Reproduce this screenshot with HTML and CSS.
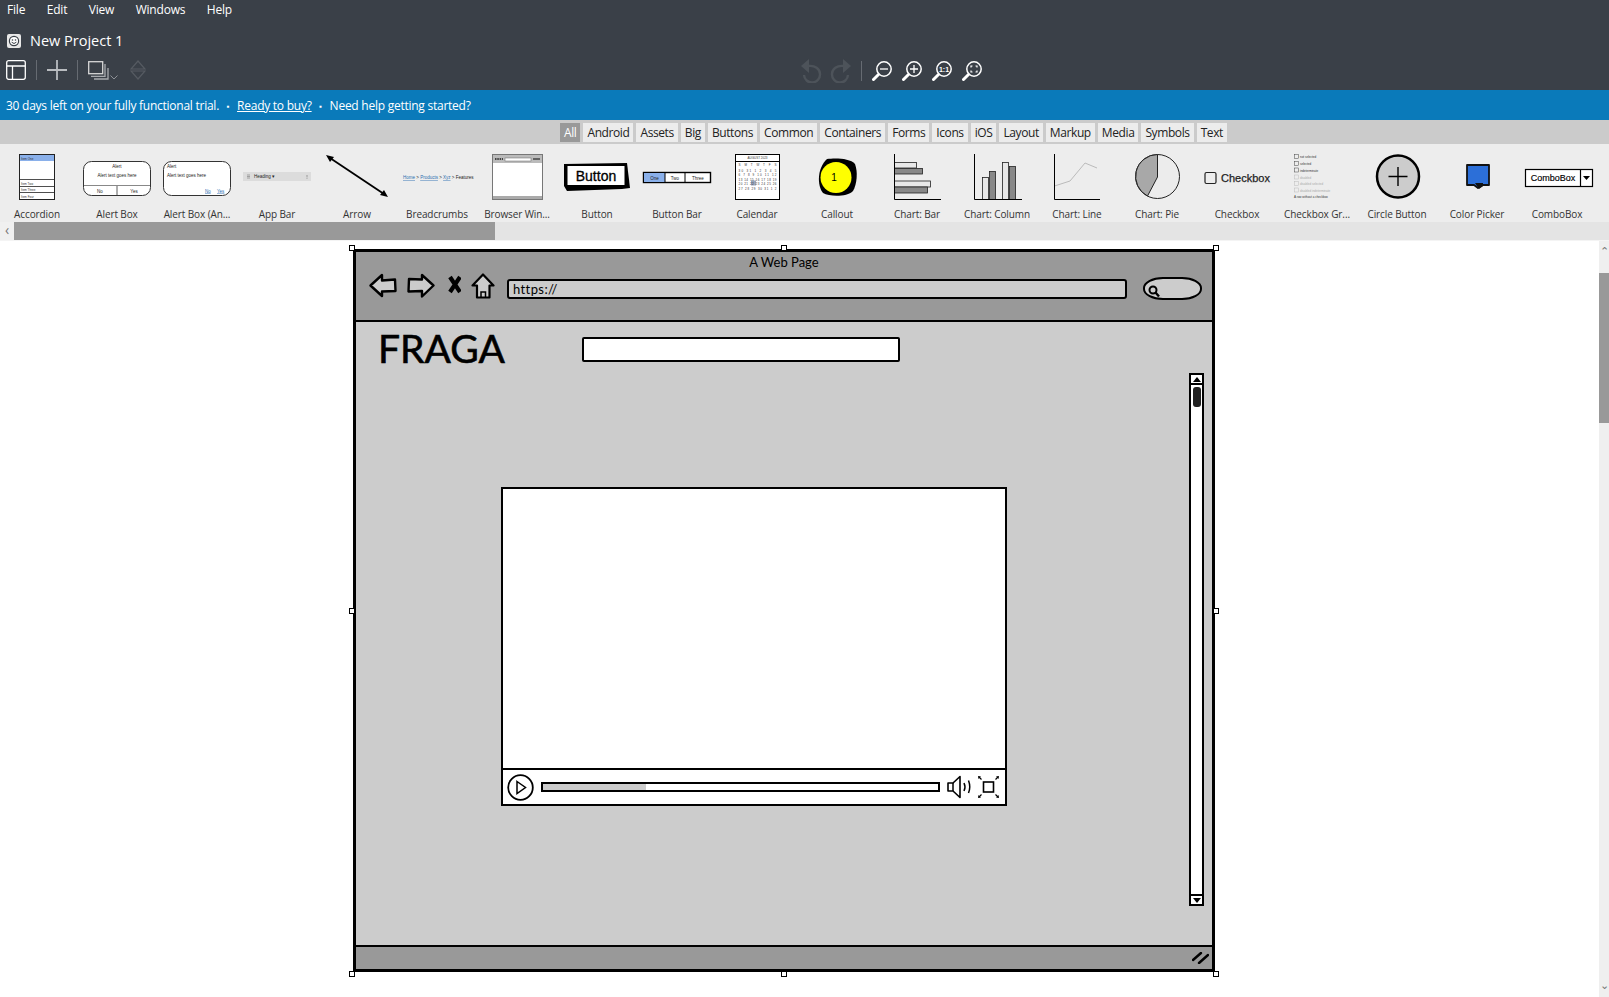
FILE: index.html
```html
<!DOCTYPE html>
<html lang="en">
<head>
    <meta charset="UTF-8">
    <title>New Project 1</title>
    <link rel="stylesheet" href="styles.css">
</head>
<body>
<svg class="defs" width="0" height="0">
    <symbol id="lens" viewBox="0 0 20 20">
        <circle cx="12" cy="8" r="7.2" fill="none" stroke="#fff" stroke-width="1.5"/>
        <path d="M6.5 13.5 1.5 18.5" stroke="#fff" stroke-width="3" stroke-linecap="round"/>
    </symbol>
</svg>

<div class="app">
    <!-- top dark chrome -->
    <header class="chrome">
        <nav class="menu">
            <span class="menu-item">File</span>
            <span class="menu-item">Edit</span>
            <span class="menu-item">View</span>
            <span class="menu-item">Windows</span>
            <span class="menu-item">Help</span>
        </nav>
        <div class="title-row">
            <svg class="logo" width="14" height="14" viewBox="0 0 14 14">
                <rect width="14" height="14" rx="2" fill="#e8e8e8"/>
                <circle cx="7" cy="7" r="5.2" fill="#3a4048"/>
                <circle cx="7" cy="7" r="4" fill="#fff"/>
                <circle cx="5.5" cy="6" r=".8" fill="#3a4048"/>
                <circle cx="8.5" cy="6" r=".8" fill="#3a4048"/>
                <path d="M4.6 8.2Q7 10.8 9.4 8.2" fill="none" stroke="#3a4048"/>
            </svg>
            <span class="project-name">New Project 1</span>
        </div>
        <div class="toolbar">
            <div class="tool-group">
                <svg width="20" height="20" viewBox="0 0 20 20">
                    <rect x=".7" y=".7" width="18.6" height="18.6" rx="2" fill="none" stroke="#fff" stroke-width="1.3"/>
                    <path d="M1 6H19M6.5 6V19" stroke="#fff" stroke-width="1.3"/>
                </svg>
                <span class="tool-sep"></span>
                <svg width="20" height="20" viewBox="0 0 20 20">
                    <path d="M10 0V20M0 10H20" stroke="#b9bcc0" stroke-width="1.8"/>
                </svg>
                <span class="tool-sep"></span>
                <svg width="31" height="20" viewBox="0 0 31 20">
                    <rect x=".7" y="1.7" width="14" height="12" fill="#3a4048" stroke="#d8d8d8" stroke-width="1.3"/>
                    <path d="M3 16.3H17V4M6 19H20V8" fill="none" stroke="#a8abaf" stroke-width="1.3"/>
                    <path d="M22.5 15.5 26 19l3.500-3.500" fill="none" stroke="#8d9196"/>
                </svg>
                <svg class="tool-dim" width="16" height="20" viewBox="0 0 16 20">
                    <path d="M8 1 15 9H1ZM8 19 15 11H1Z" fill="none" stroke="#565b62" stroke-width="1.2"/>
                </svg>
            </div>
            <div class="tool-group tool-group-view">
                <svg width="22" height="24" viewBox="0 0 22 24">
                    <path d="M9 0 1 7l8 7Z" fill="#4d535a"/>
                    <path d="M8 7C15 6 20 10 20 15a8 8 0 0 1-16 1" fill="none" stroke="#4d535a" stroke-width="2.4"/>
                </svg>
                <svg width="22" height="24" viewBox="0 0 22 24">
                    <path d="M13 0 21 7l-8 7Z" fill="#4d535a"/>
                    <path d="M14 7C7 6 2 10 2 15a8 8 0 0 0 16 1" fill="none" stroke="#4d535a" stroke-width="2.4"/>
                </svg>
                <span class="tool-sep tool-sep-view"></span>
                <svg class="zoom-tool" width="20" height="20" viewBox="0 0 20 20">
                    <use href="#lens"/>
                    <path d="M8 8H16" stroke="#fff" stroke-width="1.300"/>
                </svg>
                <svg class="zoom-tool" width="20" height="20" viewBox="0 0 20 20">
                    <use href="#lens"/>
                    <path d="M8 8H16M12 4V12" stroke="#fff" stroke-width="1.300"/>
                </svg>
                <svg class="zoom-tool" width="20" height="20" viewBox="0 0 20 20">
                    <use href="#lens"/>
                    <text x="12" y="10.500" text-anchor="middle" class="svg-ratio">1:1</text>
                </svg>
                <svg class="zoom-tool" width="20" height="20" viewBox="0 0 20 20">
                    <use href="#lens"/>
                    <path d="M9 6.500V5H10.500M13.500 5H15V6.500M15 9.500V11H13.500M10.500 11H9V9.500" fill="none" stroke="#fff" stroke-width="1.200"/>
                </svg>
            </div>
        </div>
    </header>

    <div class="trial-bar">
        <span>30 days left on your fully functional trial.</span>
        <span class="dot">▪</span>
        <a class="trial-link">Ready to buy?</a>
        <span class="dot">▪</span>
        <span>Need help getting started?</span>
    </div>

    <!-- UI library filter -->
    <div class="filters">
        <span class="filter filter-on">All</span>
        <span class="filter">Android</span>
        <span class="filter">Assets</span>
        <span class="filter">Big</span>
        <span class="filter">Buttons</span>
        <span class="filter">Common</span>
        <span class="filter">Containers</span>
        <span class="filter">Forms</span>
        <span class="filter">Icons</span>
        <span class="filter">iOS</span>
        <span class="filter">Layout</span>
        <span class="filter">Markup</span>
        <span class="filter">Media</span>
        <span class="filter">Symbols</span>
        <span class="filter">Text</span>
    </div>

    <div class="palette">
        <div class="pal-strip">
            <div class="pal-item">
                <svg class="pal-thumb" viewBox="0 0 80 56">
                    <rect x="22.500" y="4.500" width="35" height="45" fill="#fff" stroke="#222"/>
                    <rect x="23" y="5" width="34" height="6" fill="#8ab0ea"/>
                    <path d="M22 29.500H58M22 36.500H58M22 42.500H58" stroke="#222" stroke-width=".8"/>
                    <g class="svg-tiny">
                        <text x="24" y="9.500">Item One</text>
                        <text x="24" y="34.500">Item Two</text>
                        <text x="24" y="41">Item Three</text>
                        <text x="24" y="47.500">Item Four</text>
                    </g>
                </svg>
                <span class="pal-label">Accordion</span>
            </div>
            <div class="pal-item">
                <svg class="pal-thumb" viewBox="0 0 80 56">
                    <rect x="6.500" y="11.500" width="67" height="34" rx="8" fill="#fff" stroke="#333"/>
                    <path d="M7 35.500H73" stroke="#888"/>
                    <path d="M40 36V45" stroke="#333" stroke-width=".8"/>
                    <g class="svg-small" text-anchor="middle">
                        <text x="40" y="17.500">Alert</text>
                        <text x="40" y="26.500">Alert text goes here</text>
                        <text x="23" y="42.500">No</text>
                        <text x="57" y="42.500">Yes</text>
                    </g>
                </svg>
                <span class="pal-label">Alert Box</span>
            </div>
            <div class="pal-item">
                <svg class="pal-thumb" viewBox="0 0 80 56">
                    <rect x="6.500" y="11.500" width="67" height="34" rx="8" fill="#fff" stroke="#333"/>
                    <g class="svg-small">
                        <text x="10" y="17.500">Alert</text>
                        <text x="10" y="26.500">Alert text goes here</text>
                        <text x="48" y="42.500" class="svg-link">No</text>
                        <text x="60" y="42.500" class="svg-link">Yes</text>
                    </g>
                </svg>
                <span class="pal-label">Alert Box (An...</span>
            </div>
            <div class="pal-item">
                <svg class="pal-thumb" viewBox="0 0 80 56">
                    <rect x="6" y="22" width="68" height="9" fill="#dcdcdc"/>
                    <path d="M10 25h3M10 26.500h3M10 28h3" stroke="#666" stroke-width=".5"/>
                    <text x="17" y="28" class="svg-small">Heading ▾</text>
                    <path d="M70 25v4" stroke="#777" stroke-dasharray=".7 .7"/>
                </svg>
                <span class="pal-label">App Bar</span>
            </div>
            <div class="pal-item">
                <svg class="pal-thumb" viewBox="0 0 80 56">
                    <path d="M13 8 67 44" stroke="#000" stroke-width="1.800"/>
                    <path d="M9 5 17 7 13 12ZM71 47 63 45 67 40Z" fill="#000"/>
                </svg>
                <span class="pal-label">Arrow</span>
            </div>
            <div class="pal-item">
                <svg class="pal-thumb" viewBox="0 0 80 56">
                    <text x="6" y="29" class="svg-small">
                        <tspan class="svg-link">Home</tspan> &gt; <tspan class="svg-link">Products</tspan> &gt; <tspan class="svg-link">Xyz</tspan> &gt; Features
                    </text>
                </svg>
                <span class="pal-label">Breadcrumbs</span>
            </div>
            <div class="pal-item">
                <svg class="pal-thumb" viewBox="0 0 80 56">
                    <rect x="15.500" y="4.500" width="50" height="45" fill="#fff" stroke="#777"/>
                    <rect x="16" y="5" width="49" height="8" fill="#bbb"/>
                    <rect x="28" y="8" width="26" height="3" fill="#fff" stroke="#666" stroke-width=".5"/>
                    <path d="M18 9h8" stroke="#444" stroke-dasharray="1.500 .8" stroke-width="2"/>
                    <path d="M56 9h7" stroke="#444" stroke-width="1.500"/>
                    <rect x="16" y="46" width="49" height="3" fill="#aaa"/>
                </svg>
                <span class="pal-label">Browser Win...</span>
            </div>
            <div class="pal-item">
                <svg class="pal-thumb" viewBox="0 0 80 56">
                    <path d="M7 14 70 13 73 38 65 39 10 41 7 36Z" fill="#000"/>
                    <rect x="10.500" y="16" width="57" height="19" fill="#fff"/>
                    <text x="39" y="30.500" text-anchor="middle" class="svg-btn">Button</text>
                </svg>
                <span class="pal-label">Button</span>
            </div>
            <div class="pal-item">
                <svg class="pal-thumb" viewBox="0 0 80 56">
                    <rect x="6.500" y="22.500" width="67" height="10" fill="#fff" stroke="#000" stroke-width="1.400"/>
                    <rect x="7" y="23" width="21" height="9" fill="#8ab0ea"/>
                    <path d="M28 23V32M48 23V32" stroke="#000"/>
                    <g class="svg-small" text-anchor="middle">
                        <text x="17.500" y="29.500">One</text>
                        <text x="38" y="29.500">Two</text>
                        <text x="61" y="29.500">Three</text>
                    </g>
                </svg>
                <span class="pal-label">Button Bar</span>
            </div>
            <div class="pal-item">
                <svg class="pal-thumb" viewBox="0 0 80 56">
                    <rect x="18.500" y="4.500" width="44" height="45" fill="#fff" stroke="#000"/>
                    <path d="M19 11.500H62" stroke="#000"/>
                    <rect x="34" y="30.500" width="5" height="5" fill="#9aa7bb"/>
                    <g class="svg-tiny" text-anchor="middle">
                        <text x="40.500" y="9">AUGUST 2023</text>
                        <text x="40.500" y="16" textLength="38">S M T W T F S</text>
                        <text x="40.500" y="21.500" textLength="38">30 31 1 2 3 4 5</text>
                        <text x="40.500" y="26" textLength="38">6 7 8 9 10 11 12</text>
                        <text x="40.500" y="30.500" textLength="38">13 14 15 16 17 18 19</text>
                        <text x="40.500" y="35" textLength="38">20 21 22 23 24 25 26</text>
                        <text x="40.500" y="39.500" textLength="38">27 28 29 30 31 1 2</text>
                    </g>
                </svg>
                <span class="pal-label">Calendar</span>
            </div>
            <div class="pal-item">
                <svg class="pal-thumb" viewBox="0 0 80 56">
                    <path d="M30 9C38 8 53 8 58 14 61 22 60 34 56 41 50 47 33 47 26 43 20 36 20 18 30 9Z" fill="#000"/>
                    <ellipse cx="39" cy="27.500" rx="15.500" ry="15.500" fill="#ff0"/>
                    <text x="37" y="31" text-anchor="middle" class="svg-call">1</text>
                </svg>
                <span class="pal-label">Callout</span>
            </div>
            <div class="pal-item">
                <svg class="pal-thumb" viewBox="0 0 80 56">
                    <rect x="17.500" y="12.500" width="22" height="5.500" fill="#e8e8e8" stroke="#222" stroke-width=".8"/>
                    <rect x="17.500" y="18.500" width="28" height="5.500" fill="#888" stroke="#222" stroke-width=".8"/>
                    <rect x="17.500" y="31" width="36" height="6" fill="#e8e8e8" stroke="#222" stroke-width=".8"/>
                    <rect x="17.500" y="37" width="33" height="6" fill="#888" stroke="#222" stroke-width=".8"/>
                    <path d="M17.500 4V49.500H64" fill="none" stroke="#000"/>
                </svg>
                <span class="pal-label">Chart: Bar</span>
            </div>
            <div class="pal-item">
                <svg class="pal-thumb" viewBox="0 0 80 56">
                    <rect x="25.500" y="27.500" width="6" height="22" fill="#e8e8e8" stroke="#222" stroke-width=".8"/>
                    <rect x="32.500" y="21.500" width="6" height="28" fill="#888" stroke="#222" stroke-width=".8"/>
                    <rect x="45.500" y="12.500" width="6" height="37" fill="#e8e8e8" stroke="#222" stroke-width=".8"/>
                    <rect x="52.500" y="16.500" width="6" height="33" fill="#888" stroke="#222" stroke-width=".8"/>
                    <path d="M17.500 4V49.500H65" fill="none" stroke="#000"/>
                </svg>
                <span class="pal-label">Chart: Column</span>
            </div>
            <div class="pal-item">
                <svg class="pal-thumb" viewBox="0 0 80 56">
                    <path d="M17.500 36 33 31 48 13 60 18" fill="none" stroke="#bbb"/>
                    <path d="M17.500 4V49.500H63" fill="none" stroke="#000"/>
                </svg>
                <span class="pal-label">Chart: Line</span>
            </div>
            <div class="pal-item">
                <svg class="pal-thumb" viewBox="0 0 80 56">
                    <circle cx="40.500" cy="26.500" r="22" fill="#ececec" stroke="#222"/>
                    <path d="M40.500 4.500A22 22 0 0 0 30.500 46L40.500 27Z" fill="#a8a8a8" stroke="#222"/>
                </svg>
                <span class="pal-label">Chart: Pie</span>
            </div>
            <div class="pal-item">
                <svg class="pal-thumb" viewBox="0 0 80 56">
                    <rect x="8" y="22.500" width="11" height="11" rx="1.500" fill="none" stroke="#222" stroke-width="1.200"/>
                    <text x="24" y="32" class="svg-check">Checkbox</text>
                </svg>
                <span class="pal-label">Checkbox</span>
            </div>
            <div class="pal-item">
                <svg class="pal-thumb" viewBox="0 0 80 56">
                    <g fill="none" stroke="#444" stroke-width=".5">
                        <rect x="17.500" y="4.500" width="4" height="4"/>
                        <rect x="17.500" y="11.500" width="4" height="4"/>
                        <rect x="17.500" y="18" width="4" height="4"/>
                    </g>
                    <g fill="none" stroke="#bbb" stroke-width=".5">
                        <rect x="17.500" y="25" width="4" height="4"/>
                        <rect x="17.500" y="31.500" width="4" height="4"/>
                        <rect x="17.500" y="38" width="4" height="4"/>
                    </g>
                    <g class="svg-tiny">
                        <text x="23" y="8">not selected</text>
                        <text x="23" y="15">selected</text>
                        <text x="23" y="21.500">indeterminate</text>
                        <text x="23" y="28.500" class="svg-off">disabled</text>
                        <text x="23" y="35" class="svg-off">disabled selected</text>
                        <text x="23" y="41.500" class="svg-off">disabled indeterminate</text>
                        <text x="17" y="48">A row without a checkbox</text>
                    </g>
                </svg>
                <span class="pal-label">Checkbox Gr...</span>
            </div>
            <div class="pal-item">
                <svg class="pal-thumb" viewBox="0 0 80 56">
                    <circle cx="41" cy="26.500" r="21" fill="#ccc" stroke="#000" stroke-width="2.500"/>
                    <path d="M41 17V36M31.500 26.500H50.500" stroke="#000" stroke-width="1.400"/>
                </svg>
                <span class="pal-label">Circle Button</span>
            </div>
            <div class="pal-item">
                <svg class="pal-thumb" viewBox="0 0 80 56">
                    <path d="M30 15H52V35H46L41 38 37 35H30Z" fill="#2c6fd8" stroke="#111" stroke-width="1.800" stroke-linejoin="round"/>
                    <path d="M38 33H46V36L42 39Z" fill="#111"/>
                </svg>
                <span class="pal-label">Color Picker</span>
            </div>
            <div class="pal-item">
                <svg class="pal-thumb" viewBox="0 0 80 56">
                    <rect x="8.500" y="19.500" width="67" height="17" fill="#fff" stroke="#000" stroke-width="1.200"/>
                    <path d="M63.500 20V36" stroke="#000" stroke-width="1.200"/>
                    <path d="M66 26H73L69.500 30Z" fill="#000"/>
                    <text x="36" y="31" text-anchor="middle" class="svg-combo">ComboBox</text>
                </svg>
                <span class="pal-label">ComboBox</span>
            </div>
        </div>
    </div>

    <div class="hscroll">
        <span class="hscroll-arrow">‹</span>
        <div class="hscroll-track"><div class="hscroll-thumb"></div></div>
    </div>

    <!-- editing canvas with the mockup on it -->
    <main class="canvas">
        <div class="stage">
            <div class="wire-window">
                <span class="handle handle-tl"></span>
                <span class="handle handle-tc"></span>
                <span class="handle handle-tr"></span>
                <span class="handle handle-ml"></span>
                <span class="handle handle-mr"></span>
                <span class="handle handle-bl"></span>
                <span class="handle handle-bc"></span>
                <span class="handle handle-br"></span>

                <div class="wire-top">
                    <div class="wire-title">A Web Page</div>
                    <div class="wire-nav">
                        <svg width="28" height="25" viewBox="0 0 28 25">
                            <path d="M1.500 12.500 13 2V7.500L26 6.500 26.500 18 13 18.500V23Z" fill="#ccc" stroke="#000" stroke-width="2.400" stroke-linejoin="round"/>
                        </svg>
                        <svg width="28" height="25" viewBox="0 0 28 25">
                            <path d="M26.500 12.500 15 2V6.500L2 6 1.500 18.500 15 18V23.500Z" fill="#ccc" stroke="#000" stroke-width="2.400" stroke-linejoin="round"/>
                        </svg>
                        <svg width="16" height="25" viewBox="0 0 16 25">
                            <path d="M5 4 15 19M15 4 5 19" stroke="#000" stroke-width="4.200"/>
                        </svg>
                        <svg width="24" height="27" viewBox="0 0 24 27">
                            <path d="M12 1.500 22.500 12.500H18.500V24.500H6V12.500H1.500Z" fill="#ccc" stroke="#000" stroke-width="2.200" stroke-linejoin="round"/>
                            <path d="M10 25V19H14.500V25" fill="none" stroke="#000" stroke-width="1.500"/>
                        </svg>
                        <div class="wire-url">https://</div>
                        <div class="wire-search">
                            <svg width="14" height="14" viewBox="0 0 14 14">
                                <circle cx="6" cy="6" r="3.500" fill="none" stroke="#000" stroke-width="2"/>
                                <path d="M8.500 8.500 12 12.500" stroke="#000" stroke-width="2.400"/>
                            </svg>
                        </div>
                    </div>
                </div>

                <div class="wire-body">
                    <div class="wire-logo">FRAGA</div>
                    <div class="wire-input"></div>

                    <div class="wire-video">
                        <div class="video-screen"></div>
                        <div class="video-controls">
                            <svg width="27" height="27" viewBox="0 0 27 27">
                                <circle cx="13.500" cy="13.500" r="12.300" fill="#fff" stroke="#000" stroke-width="1.800"/>
                                <path d="M10 7.500 18.500 13.500 10 19.500Z" fill="none" stroke="#000" stroke-width="1.500"/>
                            </svg>
                            <div class="video-bar"><div class="video-bar-fill"></div></div>
                            <svg width="26" height="24" viewBox="0 0 26 24">
                                <path d="M1 8H6L13 1.500V22.500L6 16H1Z" fill="#fff" stroke="#000" stroke-width="1.600" stroke-linejoin="round"/>
                                <path d="M6 8V16" stroke="#000" stroke-width="1.500"/>
                                <path d="M17 8Q19 12 17 16M21.500 5.500Q24 12 21.500 18" fill="none" stroke="#000" stroke-width="1.500"/>
                            </svg>
                            <svg width="23" height="24" viewBox="0 0 23 24">
                                <rect x="6.500" y="7" width="10" height="10" fill="#fff" stroke="#000" stroke-width="1.600"/>
                                <path d="M4.500 4.500 2 2M18.500 4.500 21 2M4.500 19.500 2 22M18.500 19.500 21 22" stroke="#000" stroke-width="1.200"/>
                                <path d="M1 1 4 1.500 1.500 4ZM22 1 19 1.500 21.500 4ZM1 23 4 22.500 1.500 20ZM22 23 19 22.500 21.500 20Z" fill="#000"/>
                            </svg>
                        </div>
                    </div>

                    <div class="wire-scroll">
                        <div class="wire-scroll-btn"><span class="tri-up"></span></div>
                        <div class="wire-scroll-track"><div class="wire-scroll-thumb"></div></div>
                        <div class="wire-scroll-btn wire-scroll-btn-down"><span class="tri-down"></span></div>
                    </div>
                </div>

                <div class="wire-status">
                    <svg width="17" height="12" viewBox="0 0 17 12">
                        <path d="M1 8 9 1M7 11 16 3" stroke="#000" stroke-width="2.400" stroke-linecap="round"/>
                    </svg>
                </div>
            </div>
        </div>
        <div class="vscroll">
            <span class="vscroll-arrow">⌃</span>
            <div class="vscroll-thumb"></div>
            <span class="vscroll-arrow vscroll-arrow-down">⌄</span>
        </div>
    </main>
</div>
</body>
</html>
```

FILE: styles.css
```css
* {
    margin: 0;
    padding: 0;
    box-sizing: border-box;
}

body {
    font-family: "Open Sans", "Noto Sans", sans-serif;
    background-color: #fff;
    color: #222;
    overflow: hidden;
}

.defs {
    position: absolute;
}

.app {
    height: 100vh;
    display: flex;
    flex-direction: column;
}

/* Dark chrome at the top */
.chrome {
    height: 90px;
    background-color: #3a4048;
    color: #fff;
}

.menu {
    height: 19px;
    display: flex;
    align-items: center;
    padding-left: 7px;
    gap: 21.500px;
    font-size: 12px;
    letter-spacing: -.2px;
}

.title-row {
    height: 36px;
    display: flex;
    align-items: center;
    padding: 7px 0 0 7px;
    gap: 9px;
}

.project-name {
    font-size: 14.500px;
}

.toolbar {
    display: flex;
    padding: 3px 0 0 6px;
}

.tool-group {
    display: flex;
    align-items: center;
    height: 24px;
}

.tool-group > svg {
    flex: none;
}

.tool-sep {
    width: 1px;
    height: 20px;
    margin: 0 10px;
    background-color: #666b72;
}

.tool-dim {
    margin-left: 11px;
}

.tool-group-view {
    margin-left: 654px;
    margin-top: 1px;
    gap: 8px;
}

.tool-sep-view {
    margin: 0 0 0 1px;
}

.zoom-tool {
    margin-left: 2px;
}

/* Trial notice */
.trial-bar {
    height: 30px;
    display: flex;
    align-items: center;
    padding-left: 6px;
    background-color: #0a7aba;
    color: #fff;
    font-size: 12px;
    letter-spacing: -.25px;
}

.trial-link {
    text-decoration: underline;
}

.dot {
    width: 18px;
    text-align: center;
    font-size: 8px;
}

/* Library filter */
.filters {
    height: 24px;
    display: flex;
    align-items: flex-start;
    padding: 3px 0 0 560px;
    gap: 3px;
    background-color: #cbcbcb;
    font-size: 12px;
    letter-spacing: -.4px;
}

.filter {
    height: 19px;
    line-height: 19px;
    padding: 0 4px;
    background-color: #ececec;
    color: #222;
}

.filter-on {
    background-color: #999;
    color: #fff;
}

/* Library items */
.palette {
    height: 78px;
    background-color: #ededed;
    overflow: hidden;
}

.pal-strip {
    display: flex;
    margin-left: -3px;
    padding-top: 6px;
}

.pal-item {
    flex: none;
    width: 80px;
    display: flex;
    flex-direction: column;
    align-items: center;
}

.pal-thumb {
    display: block;
    width: 80px;
    height: 56px;
}

.pal-label {
    margin-top: 1px;
    font-size: 10px;
    line-height: 14px;
    letter-spacing: -.1px;
    color: #333;
    white-space: nowrap;
}

.pal-thumb text {
    font-family: "Liberation Sans", sans-serif;
}

.svg-tiny {
    font-size: 3px;
    fill: #333;
}

.svg-small {
    font-size: 4.500px;
    fill: #222;
}

.svg-link {
    fill: #2a6db0;
    text-decoration: underline;
}

.svg-off {
    fill: #aaa;
}

.svg-btn {
    font-size: 14px;
    fill: #000;
    stroke: #000;
    stroke-width: .3px;
}

.svg-call {
    font-size: 10px;
    fill: #000;
}

.svg-check {
    font-size: 11px;
    fill: #222;
    stroke: #222;
    stroke-width: .25px;
}

.svg-combo {
    font-size: 9px;
    fill: #000;
    stroke: #000;
    stroke-width: .15px;
}

.svg-ratio {
    font-family: "Liberation Sans", sans-serif;
    font-size: 7px;
    font-weight: bold;
    fill: #fff;
}

/* Horizontal scrollbar under the library */
.hscroll {
    height: 18px;
    display: flex;
    background-color: #e4e4e4;
}

.hscroll-arrow {
    width: 14px;
    line-height: 16px;
    font-size: 14px;
    text-align: center;
    color: #777;
    background-color: #f0f0f0;
}

.hscroll-track {
    flex: 1;
}

.hscroll-thumb {
    width: 481px;
    height: 100%;
    background-color: #999;
}

/* Canvas */
.canvas {
    flex: 1;
    display: flex;
    min-height: 0;
    border-top: 1px solid #f4f4f4;
}

.stage {
    flex: 1;
    padding: 8px 0 0 353px;
}

.vscroll {
    width: 10px;
    display: flex;
    flex-direction: column;
    background-color: #efefef;
}

.vscroll-arrow {
    height: 18px;
    font-size: 11px;
    line-height: 20px;
    text-align: center;
    color: #777;
    flex: none;
}

.vscroll-arrow-down {
    margin-top: auto;
    line-height: 12px;
}

.vscroll-thumb {
    height: 150px;
    margin-top: 14px;
    background-color: #999;
}

/* The mockup: browser window */
.wire-window {
    position: relative;
    width: 862px;
    height: 723px;
    display: flex;
    flex-direction: column;
    border: 3px solid #000;
    background-color: #ccc;
    font-family: "Lato", "Liberation Sans", sans-serif;
    color: #000;
}

.handle {
    position: absolute;
    width: 6px;
    height: 6px;
    background-color: #fff;
    border: 1px solid #000;
}

.handle-tl { left: -7px; top: -7px; }
.handle-tc { left: 50%; top: -7px; margin-left: -3px; }
.handle-tr { right: -7px; top: -7px; }
.handle-ml { left: -7px; top: 50%; margin-top: -3px; }
.handle-mr { right: -7px; top: 50%; margin-top: -3px; }
.handle-bl { left: -7px; bottom: -8px; }
.handle-bc { left: 50%; bottom: -8px; margin-left: -3px; }
.handle-br { right: -7px; bottom: -8px; }

.wire-top {
    height: 70px;
    padding-top: 2px;
    background-color: #999;
    border-bottom: 2px solid #000;
}

.wire-title {
    height: 19px;
    line-height: 17px;
    font-size: 13px;
    text-align: center;
}

.wire-nav {
    display: flex;
    align-items: flex-start;
    gap: 10px;
    padding: 0 10px 0 13px;
}

.wire-nav > svg {
    flex: none;
}

.wire-url {
    flex: 1;
    height: 20px;
    margin: 6px 0 0 2px;
    padding-left: 4px;
    background-color: #ccc;
    border: 2px solid #000;
    border-radius: 3px;
    font-size: 13px;
    line-height: 16px;
    letter-spacing: .4px;
}

.wire-search {
    width: 59px;
    height: 23px;
    margin: 4px 0 0 6px;
    padding: 3px 0 0 2px;
    background-color: #ccc;
    border: 2px solid #000;
    border-radius: 20px / 11px;
}

.wire-body {
    position: relative;
    flex: 1;
}

.wire-logo {
    position: absolute;
    left: 22px;
    top: 3px;
    font-size: 39px;
    line-height: 46px;
    -webkit-text-stroke: .6px #000;
}

.wire-input {
    position: absolute;
    left: 226px;
    top: 15px;
    width: 318px;
    height: 25px;
    background-color: #fff;
    border: 2px solid #000;
    border-radius: 2px;
}

.wire-video {
    position: absolute;
    left: 145px;
    top: 165px;
    width: 506px;
    height: 319px;
    display: flex;
    flex-direction: column;
    background-color: #fff;
    border: 2px solid #000;
}

.video-screen {
    flex: 1;
}

.video-controls {
    height: 36px;
    display: flex;
    align-items: center;
    padding: 0 5px 0 4px;
    border-top: 2px solid #000;
}

.video-controls > svg {
    flex: none;
}

.video-bar {
    flex: 1;
    height: 10px;
    margin: 0 7px;
    border: 2px solid #000;
    background-color: #fff;
}

.video-bar-fill {
    width: 26%;
    height: 100%;
    background-color: #ccc;
}

.video-controls > svg:last-child {
    margin-left: 4px;
}

.wire-scroll {
    position: absolute;
    left: 833px;
    top: 51px;
    width: 15px;
    height: 533px;
    display: flex;
    flex-direction: column;
    background-color: #fff;
    border: 2px solid #000;
}

.wire-scroll-btn {
    height: 10px;
    display: flex;
    justify-content: center;
    align-items: center;
    border-bottom: 2px solid #000;
    flex: none;
}

.wire-scroll-btn-down {
    border-bottom: none;
    border-top: 2px solid #000;
}

.tri-up,
.tri-down {
    width: 0;
    height: 0;
    border-left: 4px solid transparent;
    border-right: 4px solid transparent;
}

.tri-up {
    border-bottom: 5px solid #000;
}

.tri-down {
    border-top: 5px solid #000;
}

.wire-scroll-track {
    flex: 1;
    padding: 2px 1px 0 2px;
}

.wire-scroll-thumb {
    height: 20px;
    background-color: #222;
    border-radius: 3px;
}

.wire-status {
    height: 24px;
    display: flex;
    justify-content: flex-end;
    align-items: center;
    padding-right: 3px;
    background-color: #999;
    border-top: 2px solid #000;
}
```
